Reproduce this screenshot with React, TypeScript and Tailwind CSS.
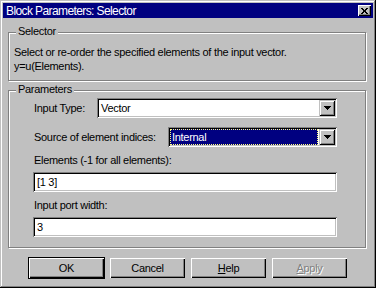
import React from 'react';

const sunken =
  'bg-white shadow-[inset_1px_1px_#808080,inset_-1px_-1px_#fff,inset_2px_2px_#000,inset_-2px_-2px_#c0c0c0]';
const raised =
  'shadow-[inset_1px_1px_#fff,inset_-1px_-1px_#000,inset_-2px_-2px_#808080]';
const etched = 'border border-[#808080] shadow-[inset_1px_1px_#fff,1px_1px_#fff]';

function DropArrow() {
  return (
    <div className={`w-4 h-4 bg-[#c0c0c0] flex items-center justify-center shadow-[inset_1px_1px_#c0c0c0,inset_-1px_-1px_#000,inset_2px_2px_#fff,inset_-2px_-2px_#808080]`}>
      <svg width="7" height="4" viewBox="0 0 7 4" shapeRendering="crispEdges">
        <rect x="0" y="0" width="7" height="1" fill="#000" />
        <rect x="1" y="1" width="5" height="1" fill="#000" />
        <rect x="2" y="2" width="3" height="1" fill="#000" />
        <rect x="3" y="3" width="1" height="1" fill="#000" />
      </svg>
    </div>
  );
}

function CloseGlyph() {
  const rows = ['1100011', '0110110', '0011100', '0011100', '0110110', '1100011'];
  return (
    <svg width="7" height="6" viewBox="0 0 7 6" shapeRendering="crispEdges">
      {rows.map((r, y) =>
        r.split('').map((c, x) => (c === '1' ? <rect key={`${x}-${y}`} x={x} y={y} width="1" height="1" fill="#000" /> : null))
      )}
    </svg>
  );
}

function GroupBox({ label, className, children }: { label: string; className: string; children: React.ReactNode }) {
  return (
    <div className={`relative ${etched} ${className}`}>
      <span className="absolute left-[7px] top-[-8px] bg-[#c0c0c0] px-[2px] leading-[13px]">{label}</span>
      {children}
    </div>
  );
}

function Button({ children, isDefault }: { children: React.ReactNode; isDefault?: boolean }) {
  return (
    <div
      className={`w-[75px] h-[20px] flex items-center justify-center bg-[#c0c0c0] ${
        isDefault ? 'outline outline-1 outline-black' : ''
      } ${raised}`}
    >
      {children}
    </div>
  );
}

export default function App() {
  return (
    <div className="w-[376px] h-[288px] bg-[#c0c0c0] p-[3px] flex flex-col text-[11px] tracking-[-0.3px] text-black font-['Liberation_Sans',Arial,sans-serif] shadow-[inset_-1px_-1px_#000,inset_1px_1px_#c0c0c0,inset_-2px_-2px_#808080,inset_2px_2px_#fff]">
      {/* Title bar */}
      <div className="h-[15px] bg-[#000080] flex items-center justify-between pl-[3px] pr-[2px]">
        <span className="text-white text-[12px] tracking-[-0.6px]">Block Parameters: Selector</span>
        <div className={`w-[13px] h-[11px] bg-[#c0c0c0] flex items-center justify-center ${raised}`}>
          <CloseGlyph />
        </div>
      </div>

      {/* Selector group */}
      <GroupBox label="Selector" className="ml-[5px] mt-[14px] w-[358px] h-[49px]">
        <div className="pl-[5px] pt-[12px] leading-[14px]">
          <div>Select or re-order the specified elements of the input vector.</div>
          <div>y=u(Elements).</div>
        </div>
      </GroupBox>

      {/* Parameters group */}
      <GroupBox label="Parameters" className="ml-[5px] mt-[9px] w-[358px] h-[158px]">
        <div className="pl-[24px] pt-[7px] flex flex-col">
          <div className="flex items-center h-[20px]">
            <span className="w-[64px] pl-[1px]">Input Type:</span>
            <div className={`w-[240px] h-[20px] ${sunken} flex items-center justify-between p-[2px]`}>
              <span className="pl-[2px]">Vector</span>
              <DropArrow />
            </div>
          </div>
          <div className="flex items-center h-[20px] mt-[9px]">
            <span className="w-[135px] pl-[1px]">Source of element indices:</span>
            <div className={`w-[169px] h-[20px] ${sunken} flex items-center justify-between p-[2px]`}>
              <div className="flex-1 h-[16px] mr-[1px] bg-[#000080] border border-dotted border-[#ffff80] flex items-center">
                <span className="text-white pl-[1px]">Internal</span>
              </div>
              <DropArrow />
            </div>
          </div>
          <div className="mt-[7px] h-[13px] leading-[13px] pl-[1px]">Elements (-1 for all elements):</div>
          <div className={`mt-[5px] w-[304px] h-[20px] ${sunken} flex items-center pl-[4px]`}>[1 3]</div>
          <div className="mt-[7px] h-[13px] leading-[13px] pl-[1px]">Input port width:</div>
          <div className={`mt-[5px] w-[304px] h-[20px] ${sunken} flex items-center pl-[4px]`}>3</div>
        </div>
      </GroupBox>

      {/* Buttons */}
      <div className="mt-[10px] flex justify-center gap-[6px]">
        <Button isDefault>OK</Button>
        <Button>Cancel</Button>
        <Button>
          <span>
            <span className="underline">H</span>elp
          </span>
        </Button>
        <Button>
          <span className="text-[#808080] [text-shadow:1px_1px_#fff]">
            <span className="underline">A</span>pply
          </span>
        </Button>
      </div>
    </div>
  );
}
